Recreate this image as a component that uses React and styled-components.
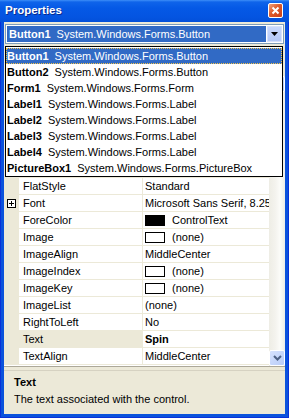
import React from 'react'
import styled, { createGlobalStyle } from 'styled-components'

const GlobalStyle = createGlobalStyle`
  html, body {
    margin: 0;
    padding: 0;
    background: #fff;
  }
  body {
    font-family: "Liberation Sans", Arial, sans-serif;
    font-size: 11px;
    color: #000;
  }
`

const objects = [
  { name: 'Button1', type: 'System.Windows.Forms.Button', selected: true },
  { name: 'Button2', type: 'System.Windows.Forms.Button' },
  { name: 'Form1', type: 'System.Windows.Forms.Form' },
  { name: 'Label1', type: 'System.Windows.Forms.Label' },
  { name: 'Label2', type: 'System.Windows.Forms.Label' },
  { name: 'Label3', type: 'System.Windows.Forms.Label' },
  { name: 'Label4', type: 'System.Windows.Forms.Label' },
  { name: 'PictureBox1', type: 'System.Windows.Forms.PictureBox' },
]

// the first rows sit under the open drop-down list
const properties = [
  { name: 'BackColor', value: 'Control', swatch: '#ece9d8' },
  { name: 'BackgroundImage', value: '(none)', swatch: '#fff' },
  { name: 'BackgroundImageLayout', value: 'Tile' },
  { name: 'Cursor', value: 'Default' },
  { name: 'Enabled', value: 'True' },
  { name: 'FlatAppearance', value: '', expandable: true },
  { name: 'FlatStyle', value: 'Standard' },
  { name: 'Font', value: 'Microsoft Sans Serif, 8.25pt', expandable: true },
  { name: 'ForeColor', value: 'ControlText', swatch: '#000' },
  { name: 'Image', value: '(none)', swatch: '#fff' },
  { name: 'ImageAlign', value: 'MiddleCenter' },
  { name: 'ImageIndex', value: '(none)', swatch: '#fff' },
  { name: 'ImageKey', value: '(none)', swatch: '#fff' },
  { name: 'ImageList', value: '(none)' },
  { name: 'RightToLeft', value: 'No' },
  { name: 'Text', value: 'Spin', bold: true, selected: true },
  { name: 'TextAlign', value: 'MiddleCenter' },
]

const Window = styled.div`
  width: 289px;
  height: 418px;
  display: flex;
  flex-direction: column;
  background: #0a52dc;
  box-sizing: border-box;
  box-shadow: inset 1px 0 0 #0831d9, inset -1px 0 0 #0831d9, inset 0 -1px 0 #0831d9;
`

const TitleBar = styled.div`
  height: 22px;
  flex: none;
  display: flex;
  align-items: center;
  justify-content: space-between;
  padding: 0 6px 2px 5px;
  box-sizing: border-box;
  background: linear-gradient(
    #3d8ef8 0,
    #0f64ea 2px,
    #0559e6 8px,
    #0455e2 16px,
    #0350da 22px
  );
`

const Title = styled.span`
  color: #fff;
  font-weight: bold;
  font-size: 11.5px;
  text-shadow: 1px 1px 0 #0a2a8c;
`

const CloseButton = styled.div`
  width: 13px;
  height: 13px;
  margin-top: 1px;
  border: 1px solid #fff;
  border-radius: 2px;
  background: linear-gradient(135deg, #f0a27e 0%, #de5a2a 45%, #c8401a 100%);
  display: flex;
  align-items: center;
  justify-content: center;
`

const Client = styled.div`
  flex: 1;
  margin: 0 4px 4px;
  background: #ece9d8;
  display: flex;
  flex-direction: column;
  min-height: 0;
`

const ComboWrap = styled.div`
  position: relative;
  padding: 2px 1px 0;
  flex: none;
`

const Combo = styled.div`
  height: 20px;
  box-sizing: border-box;
  border: 1px solid #7f9db9;
  background: #fff;
  padding: 1px;
  display: flex;
`

const ComboValue = styled.div`
  flex: 1;
  background: #316ac5;
  color: #fff;
  line-height: 16px;
  padding-left: 2px;
  white-space: nowrap;
  overflow: hidden;
`

const ComboButton = styled.div`
  width: 15px;
  margin-left: 1px;
  box-sizing: border-box;
  border: 1px solid #d6e1fb;
  background: linear-gradient(#c9d8fc, #b4c8f6);
  display: flex;
  align-items: center;
  justify-content: center;
`

const ObjectName = styled.b`
  margin-right: 3px;
`

const DropList = styled.ul`
  position: absolute;
  z-index: 2;
  top: calc(100% + 2px);
  left: 1px;
  right: 2px;
  margin: 0;
  padding: 1px 0 0;
  list-style: none;
  background: #fff;
  border: 1px solid #000;
`

const DropItem = styled.li`
  height: 16px;
  box-sizing: border-box;
  line-height: 14px;
  border: 1px dotted ${p => (p.$selected ? '#f3c34a' : 'transparent')};
  background: ${p => (p.$selected ? '#316ac5' : 'transparent')};
  color: ${p => (p.$selected ? '#fff' : '#000')};
  white-space: nowrap;
  overflow: hidden;
`

const Toolbar = styled.div`
  height: 32px;
  flex: none;
`

const GridArea = styled.div`
  height: 290px;
  flex: none;
  display: flex;
  border-bottom: 1px solid #aca899;
`

const Grid = styled.div`
  flex: 1;
  background: #fff;
  overflow: hidden;
`

const Row = styled.div`
  display: grid;
  grid-template-columns: 15px 124px 1fr;
  height: 17px;
`

const Gutter = styled.div`
  background: #ece9d8;
  display: flex;
  align-items: center;
  justify-content: center;
`

const Expander = styled.span`
  width: 7px;
  height: 7px;
  border: 1px solid #000;
  background: #fff;
  position: relative;
  &::before,
  &::after {
    content: '';
    position: absolute;
    background: #000;
  }
  &::before {
    left: 1px;
    top: 3px;
    width: 5px;
    height: 1px;
  }
  &::after {
    left: 3px;
    top: 1px;
    width: 1px;
    height: 5px;
  }
`

const NameCell = styled.div`
  padding-left: 4px;
  line-height: 16px;
  border-bottom: 1px solid #ece9d8;
  border-right: 1px solid #ece9d8;
  background: ${p => (p.$selected ? '#ece9d8' : '#fff')};
  white-space: nowrap;
  overflow: hidden;
`

const ValueCell = styled.div`
  padding-left: 2px;
  line-height: 16px;
  border-bottom: 1px solid #ece9d8;
  font-weight: ${p => (p.$bold ? 'bold' : 'normal')};
  white-space: nowrap;
  overflow: hidden;
  display: flex;
  align-items: center;
`

const Swatch = styled.span`
  width: 18px;
  height: 9px;
  border: 1px solid #000;
  margin-right: 7px;
  flex: none;
  background: ${p => p.$color};
`

const Scrollbar = styled.div`
  width: 16px;
  display: flex;
  flex-direction: column;
  justify-content: space-between;
  background: linear-gradient(to right, #eeede5, #f4f3ee 40%, #fcfcf9 70%, #eeede5);
`

const ScrollButton = styled.div`
  height: 16px;
  box-sizing: border-box;
  border: 1px solid #fff;
  border-radius: 2px;
  background: linear-gradient(135deg, #d6e2fe, #b8ccf8);
  display: flex;
  align-items: center;
  justify-content: center;
`

const Help = styled.div`
  flex: 1;
  margin-top: 3px;
  border-top: 1px solid #d6d2c2;
  padding: 4px 10px 0;
  line-height: 14px;
`

const HelpTitle = styled.div`
  font-weight: bold;
`

const HelpText = styled.div`
  margin-top: 3px;
`

function Chevron({ up }) {
  return (
    <svg width="9" height="6" viewBox="0 0 9 6">
      <path
        d={up ? 'M1 5 L4.5 1.5 L8 5' : 'M1 1 L4.5 4.5 L8 1'}
        fill="none"
        stroke="#4d6185"
        strokeWidth="2"
      />
    </svg>
  )
}

export default function App() {
  return (
    <>
      <GlobalStyle />
      <Window>
        <TitleBar>
          <Title>Properties</Title>
          <CloseButton>
            <svg width="9" height="9" viewBox="0 0 9 9">
              <path d="M1.5 1.5 L7.5 7.5 M7.5 1.5 L1.5 7.5" stroke="#fff" strokeWidth="2" />
            </svg>
          </CloseButton>
        </TitleBar>
        <Client>
          <ComboWrap>
            <Combo>
              <ComboValue>
                <ObjectName>Button1</ObjectName> System.Windows.Forms.Button
              </ComboValue>
              <ComboButton>
                <svg width="7" height="4" viewBox="0 0 7 4">
                  <path d="M0 0 H7 L3.5 4 Z" fill="#000" />
                </svg>
              </ComboButton>
            </Combo>
            <DropList>
              {objects.map(o => (
                <DropItem key={o.name} $selected={o.selected}>
                  <ObjectName>{o.name}</ObjectName> {o.type}
                </DropItem>
              ))}
            </DropList>
          </ComboWrap>
          <Toolbar />
          <GridArea>
            <Grid>
              {properties.map(p => (
                <Row key={p.name}>
                  <Gutter>{p.expandable && <Expander />}</Gutter>
                  <NameCell $selected={p.selected}>{p.name}</NameCell>
                  <ValueCell $bold={p.bold}>
                    {p.swatch && <Swatch $color={p.swatch} />}
                    {p.value}
                  </ValueCell>
                </Row>
              ))}
            </Grid>
            <Scrollbar>
              <ScrollButton>
                <Chevron up />
              </ScrollButton>
              <ScrollButton>
                <Chevron />
              </ScrollButton>
            </Scrollbar>
          </GridArea>
          <Help>
            <HelpTitle>Text</HelpTitle>
            <HelpText>The text associated with the control.</HelpText>
          </Help>
        </Client>
      </Window>
    </>
  )
}
